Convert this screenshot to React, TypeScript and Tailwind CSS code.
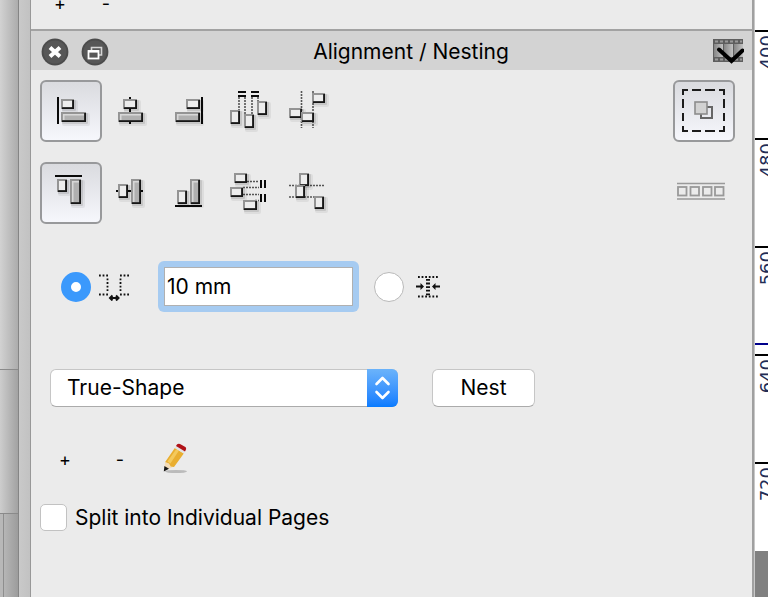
import React, { useState } from 'react';

type Rect = [number, number, number, number];

interface AlignIconProps {
  boxes?: Rect[];
  bars?: Rect[];
  lines?: Rect[];
  dots?: Rect[];
}

// Bevelled block: grey on the top left edges, black on the bottom right ones
const Block = ({ rect, filled }: { rect: Rect; filled?: boolean }) => {
  const [x, y, w, h] = rect;
  return (
    <g>
      <rect x={x + 1} y={y + 1} width={w + 3} height={h + 3} rx="2" fill="#000" opacity="0.06" />
      <rect x={x + 1} y={y + 1} width={w + 1} height={h + 1} rx="1" fill="#000" opacity="0.1" />
      <rect x={x} y={y} width={w} height={h} fill="#949494" />
      <path d={`M${x + w} ${y + 1}V${y + h}H${x + 1}V${y + h - 1.8}H${x + w - 1.8}V${y + 1}Z`} fill="#161616" />
      <rect x={x + 2} y={y + 2} width={w - 4} height={h - 4} fill={filled ? '#b0b0b0' : '#ededed'} />
      {filled && <path d={`M${x + 2.7} ${y + h - 2}V${y + 2.7}H${x + w - 2}`} stroke="#d8d8d8" strokeWidth="1.6" fill="none" />}
    </g>
  );
};

const AlignIcon = ({ boxes = [], bars = [], lines = [], dots = [] }: AlignIconProps) => (
  <svg width="40" height="40" viewBox="0 0 40 40" className="overflow-visible" aria-hidden="true">
    {lines.map(([x, y, w, h], i) => <rect key={i} x={x} y={y} width={w} height={h} fill="#0a0a0a" />)}
    {dots.map(([x1, y1, x2, y2], i) => (
      <line key={i} x1={x1} y1={y1} x2={x2} y2={y2} stroke="#555" strokeWidth="1.6" strokeDasharray="2 1" />
    ))}
    {boxes.map((r, i) => <Block key={i} rect={r} />)}
    {bars.map((r, i) => <Block key={i} rect={r} filled />)}
  </svg>
);

const horizontalTools: (AlignIconProps & { label: string })[] = [
  { label: 'Align left', lines: [[6, 6, 2, 27]], boxes: [[10, 8, 13, 10]], bars: [[10, 21, 25, 10]] },
  { label: 'Center horizontally', lines: [[17, 6, 2, 27]], boxes: [[11, 8, 14, 10]], bars: [[6, 21, 25, 10]] },
  { label: 'Align right', lines: [[30, 6, 2, 27]], boxes: [[15, 8, 14, 10]], bars: [[4, 21, 25, 10]] },
  {
    label: 'Distribute horizontally',
    lines: [[8, 0, 8, 2], [8, 4, 8, 2], [21, 0, 8, 2], [21, 4, 8, 2]],
    dots: [[9, 6, 9, 19], [15, 6, 15, 23], [22, 6, 22, 23], [28, 6, 28, 10]],
    boxes: [[0, 19, 10, 14], [14, 23, 10, 14], [27, 10, 10, 14]],
  },
  {
    label: 'Stack horizontally',
    dots: [[12.5, 0, 12.5, 37], [24, 0, 24, 37]],
    boxes: [[0, 17, 13, 10], [12, 21, 13, 10], [23, 2, 13, 10]],
  },
];

const verticalTools: (AlignIconProps & { label: string })[] = [
  { label: 'Align top', lines: [[4, 2, 27, 2]], boxes: [[6, 6, 10, 13]], bars: [[19, 6, 11, 25]] },
  { label: 'Center vertically', lines: [[4, 17, 27, 2]], boxes: [[6, 11, 10, 14]], bars: [[19, 6, 10, 25]] },
  { label: 'Align bottom', lines: [[4, 32, 27, 2]], boxes: [[6, 17, 10, 14]], bars: [[19, 6, 10, 25]] },
  {
    label: 'Distribute vertically',
    lines: [[30, 7, 2, 8], [34, 7, 2, 8], [30, 21, 2, 8], [34, 21, 2, 8]],
    dots: [[17, 8.5, 29, 8.5], [13, 14.5, 29, 14.5], [13, 21.5, 29, 21.5], [25, 27.5, 29, 27.5]],
    boxes: [[4, 0, 13, 10], [0, 14, 13, 10], [13, 27, 14, 10]],
  },
  {
    label: 'Stack vertically',
    dots: [[0, 12.5, 36, 12.5], [0, 24, 36, 24]],
    boxes: [[10, 0, 10, 13], [6, 12, 10, 13], [25, 23, 10, 13]],
  },
];

const pressed = 'flex size-[62px] shrink-0 items-center justify-center rounded-md border-2 border-[#98999b] bg-linear-to-b from-[#dadbdf] to-[#f6f7fc]';
const flat = 'flex h-[62px] w-[58px] shrink-0 items-center justify-center';

const ToolRow = ({ tools, children }: { tools: typeof horizontalTools; children: React.ReactNode }) => {
  const [active, setActive] = useState(0);
  return (
    <div className="flex items-center justify-between">
      <div className="flex gap-px">
        {tools.map(({ label, ...icon }, i) => (
          <button key={label} aria-label={label} onClick={() => setActive(i)} className={i === active ? pressed : flat}>
            <AlignIcon {...icon} />
          </button>
        ))}
      </div>
      {children}
    </div>
  );
};

const SelectionIcon = () => (
  <svg width="44" height="44" viewBox="0 0 44 44" fill="none" aria-hidden="true">
    <path
      d="M1 6V1H6M10 1H19M23 1H33M37 1H42V6M42 10V19M42 24V32M42 37V42H37M33 42H23M19 42H10M6 42H1V37M1 32V24M1 19V10"
      stroke="#1c1c1c" strokeWidth="2"
    />
    <rect x="19" y="18" width="11" height="11" stroke="#666" strokeWidth="2" />
    <rect x="13" y="13" width="12" height="12" fill="#d2d2d2" stroke="#8c8c8c" strokeWidth="1.6" />
  </svg>
);

const StripIcon = () => (
  <svg width="48" height="22" viewBox="0 0 48 22" fill="none" stroke="#999" aria-hidden="true">
    <path d="M0 1.5H48M0 17H48" strokeWidth="1.4" />
    {[1, 13.5, 26, 38].map(x => <rect key={x} x={x} y="5" width="8.5" height="8.5" strokeWidth="1.8" />)}
  </svg>
);

const CloseIcon = () => (
  <svg width="28" height="28" viewBox="0 0 28 28" aria-hidden="true">
    <circle cx="14" cy="14" r="13.4" fill="#4c4c4c" />
    <circle cx="14" cy="14" r="11.5" fill="#575757" />
    <path d="M9 9.5L19 18.5M19 9.5L9 18.5" stroke="#fff" strokeWidth="4" />
  </svg>
);

const FloatIcon = () => (
  <svg width="28" height="28" viewBox="0 0 28 28" fill="none" aria-hidden="true">
    <circle cx="14" cy="14" r="13.4" fill="#4c4c4c" />
    <circle cx="14" cy="14" r="11.5" fill="#575757" />
    <path d="M10.5 12V9.5H20.5V17H18" stroke="#d5d5d5" strokeWidth="1.6" />
    <rect x="7.5" y="13" width="10" height="7.5" stroke="#fff" strokeWidth="1.8" />
    <path d="M7 13.4H18" stroke="#fff" strokeWidth="2.4" />
  </svg>
);

const FilmIcon = () => (
  <svg width="31" height="25" viewBox="0 0 31 25" fill="none" aria-hidden="true">
    <defs>
      <linearGradient id="film" x1="0" x2="1">
        <stop offset="0" stopColor="#858585" />
        <stop offset="1" stopColor="#c2c2c2" />
      </linearGradient>
    </defs>
    <rect width="30" height="23" fill="#5e5e5e" />
    {[1, 11, 21].map(x => <rect key={x} x={x} y="5" width="9" height="13" fill="url(#film)" />)}
    <path d="M2 2.5H29M2 20.5H29" stroke="#999" strokeWidth="2" strokeDasharray="3 2" />
    <path d="M6 10.5L18.5 22L29.5 11.5" stroke="#000" strokeWidth="4" strokeLinecap="round" />
  </svg>
);

const SpacingIcon = () => (
  <svg width="32" height="28" viewBox="0 0 32 28" fill="none" stroke="#111" aria-hidden="true">
    <path d="M1 2.5H11M22 2.5H32M1 21.5H11M22 21.5H32M9.5 5.5V20M22.5 5.5V20" strokeWidth="1.8" strokeDasharray="1.8 1.8" />
    <path d="M12 25H20M14.5 22.5L12 25L14.5 27.5M18 22.5L20.5 25L18 27.5" strokeWidth="2" />
  </svg>
);

const CompactIcon = () => (
  <svg width="24" height="24" viewBox="0 0 24 24" fill="none" stroke="#111" aria-hidden="true">
    <path d="M2 2H22M2 21.5H22" strokeWidth="1.8" strokeDasharray="1.8 1.8" />
    <path d="M12 4V21" strokeWidth="4" strokeDasharray="1.8 1.8" />
    <path d="M0 11.5H6M24 11.5H18" strokeWidth="2" />
    <path d="M8 11.5L4.5 8V15ZM16 11.5L19.5 8V15Z" fill="#111" stroke="none" />
  </svg>
);

const PencilIcon = () => (
  <svg width="26" height="31" viewBox="0 0 26 31" aria-hidden="true">
    <ellipse cx="14" cy="28.5" rx="11" ry="1.6" fill="#bbb" />
    <path d="M3.2 18.5L12 23.5L2 28Z" fill="#f3dcb8" />
    <path d="M3.2 19L12.8 5L21.8 10.4L12 24L8.8 23.6L7 20.4Z" fill="#e9ae30" />
    <path d="M5.4 18.5L14.2 6.2L17 7.6L8.4 20.4Z" fill="#f4c95c" />
    <path d="M12.8 5L14 3L23 8.4L21.8 10.4Z" fill="#e2e2e2" />
    <path d="M14 3Q15.2 0 18 1L23.4 4Q25 5.6 23 8.4Z" fill="#b01218" />
    <path d="M2.4 23L7 25.8L1.8 28.4Z" fill="#181818" />
  </svg>
);

const rulerMarks = ['400', '480', '560', '640'];
const rulerLabel = 'mt-[3px] ml-[2px] rotate-180 [writing-mode:vertical-rl] font-["DejaVu_Sans",sans-serif] text-[18px] leading-5 text-[#222c55]';

const Ruler = () => (
  <div className="relative flex w-[14px] shrink-0 flex-col overflow-hidden border-l border-[#c8c8c8] bg-white">
    <div className="h-[30px] shrink-0" />
    {rulerMarks.map(mark => (
      <div key={mark} className="flex h-[108px] shrink-0 items-start border-t-2 border-black">
        <span className={rulerLabel}>{mark}</span>
      </div>
    ))}
    <div className="flex h-[89px] shrink-0 items-start border-t-2 border-black">
      <span className={rulerLabel}>720</span>
    </div>
    <div className="flex-1 bg-[#808080]" />
    <div className="absolute top-[343px] left-0 h-[2px] w-full bg-[#00008b]" />
  </div>
);

const radio = 'size-[30px] shrink-0 appearance-none rounded-full border border-[#b9b9b9] bg-white checked:border-[10px] checked:border-[#3b99fc]';

const App: React.FC = () => {
  const [mode, setMode] = useState('spacing');
  const [spacing, setSpacing] = useState('10 mm');

  return (
    <div className="flex min-h-screen overflow-hidden bg-[#ebebeb] font-[Inter,sans-serif] text-[21px] leading-6 text-black">
      {/* Edge of the window behind */}
      <div className="flex w-[19px] shrink-0 flex-col border-r border-[#858585]">
        <div className="h-[369px] bg-linear-to-r from-[#d2d2d2] to-[#acacac]" />
        <div className="h-[144px] border-t border-[#8a8a8a] bg-linear-to-r from-[#cdcdcd] to-[#a2a2a2]" />
        <div className="flex flex-1 border-t border-[#8a8a8a]">
          <div className="w-1 border-r border-[#8e8e8e] bg-[#b8b8b8]" />
          <div className="flex-1 bg-linear-to-r from-[#b6b6b6] to-[#9c9c9c]" />
        </div>
      </div>
      <div className="w-3 shrink-0 border-r border-[#989898] bg-linear-to-r from-[#c9c9c9] to-[#c2c2c2]" />

      <main className="flex min-w-0 flex-1 flex-col border-r-2 border-[#a0a0a0]">
        <div className="flex h-[31px] items-start gap-[34px] border-b-2 border-[#a2a2a2] pl-[23px] text-[18px] leading-2">
          <button aria-label="Add entry" className="w-3">+</button>
          <button aria-label="Remove entry" className="w-3">-</button>
        </div>

        <header className="flex h-[39px] items-center bg-[#d3d3d3] pt-[2px] pr-2 pl-[10px]">
          <div className="flex gap-3">
            <button aria-label="Close"><CloseIcon /></button>
            <button aria-label="Float"><FloatIcon /></button>
          </div>
          <h1 className="flex-1 text-center">Alignment / Nesting</h1>
          <button aria-label="Panel menu"><FilmIcon /></button>
        </header>

        <div className="flex flex-col pt-[10px] pr-[17px] pl-[9px]">
          <div className="flex flex-col gap-5">
            <ToolRow tools={horizontalTools}>
              <button aria-label="Align to selection" className={pressed}><SelectionIcon /></button>
            </ToolRow>
            <ToolRow tools={verticalTools}>
              <button aria-label="Align to pages" className="mr-[10px]"><StripIcon /></button>
            </ToolRow>
          </div>

          <div className="mt-[37px] flex items-center pl-[21px]">
            <label className="flex items-center gap-[7px]">
              <input type="radio" name="mode" aria-label="Spacing" checked={mode === 'spacing'} onChange={() => setMode('spacing')} className={radio} />
              <SpacingIcon />
            </label>
            <div className="ml-7 rounded-md bg-[#a6cbf1] p-[6px]">
              <input
                aria-label="Distance"
                value={spacing}
                onChange={e => setSpacing(e.target.value)}
                className="block h-[39px] w-[189px] border border-[#b0b0b0] bg-white px-[2px] outline-none"
              />
            </div>
            <label className="ml-[15px] flex items-center gap-3">
              <input type="radio" name="mode" aria-label="Compact" checked={mode === 'compact'} onChange={() => setMode('compact')} className={radio} />
              <CompactIcon />
            </label>
          </div>

          <div className="mt-[57px] flex items-center gap-[34px] pl-[10px]">
            <div className="relative">
              <select
                aria-label="Nesting method"
                className="block h-[38px] w-[348px] appearance-none rounded-md border border-[#c6c6c6] border-b-[#ababab] bg-white pr-9 pl-4 outline-none"
              >
                <option>True-Shape</option>
              </select>
              <div className="pointer-events-none absolute inset-y-0 right-0 flex w-[31px] items-center justify-center rounded-r-md bg-linear-to-b from-[#6bb3fa] to-[#067bff]">
                <svg width="17" height="26" viewBox="0 0 17 26" fill="none" stroke="#fff" strokeWidth="2.6" strokeLinecap="round" strokeLinejoin="round" aria-hidden="true">
                  <path d="M2.5 9L8.5 3L14.5 9M2.5 17L8.5 23L14.5 17" />
                </svg>
              </div>
            </div>
            <button className="h-[38px] w-[103px] rounded-md border border-[#c6c6c6] border-b-[#ababab] bg-white">Nest</button>
          </div>

          <div className="mt-9 flex items-center pl-[19px] text-[18px]">
            <button aria-label="Add" className="w-3 pt-[2px]">+</button>
            <button aria-label="Remove" className="ml-[43px] w-3 pt-[2px]">-</button>
            <button aria-label="Edit" className="ml-9"><PencilIcon /></button>
          </div>

          <label className="mt-[30px] flex items-center gap-2">
            <input type="checkbox" className="size-[27px] appearance-none rounded-[5px] border border-[#c2c2c2] bg-white checked:bg-[#3b99fc]" />
            Split into Individual Pages
          </label>
        </div>
      </main>

      <Ruler />
    </div>
  );
};

export default App;
